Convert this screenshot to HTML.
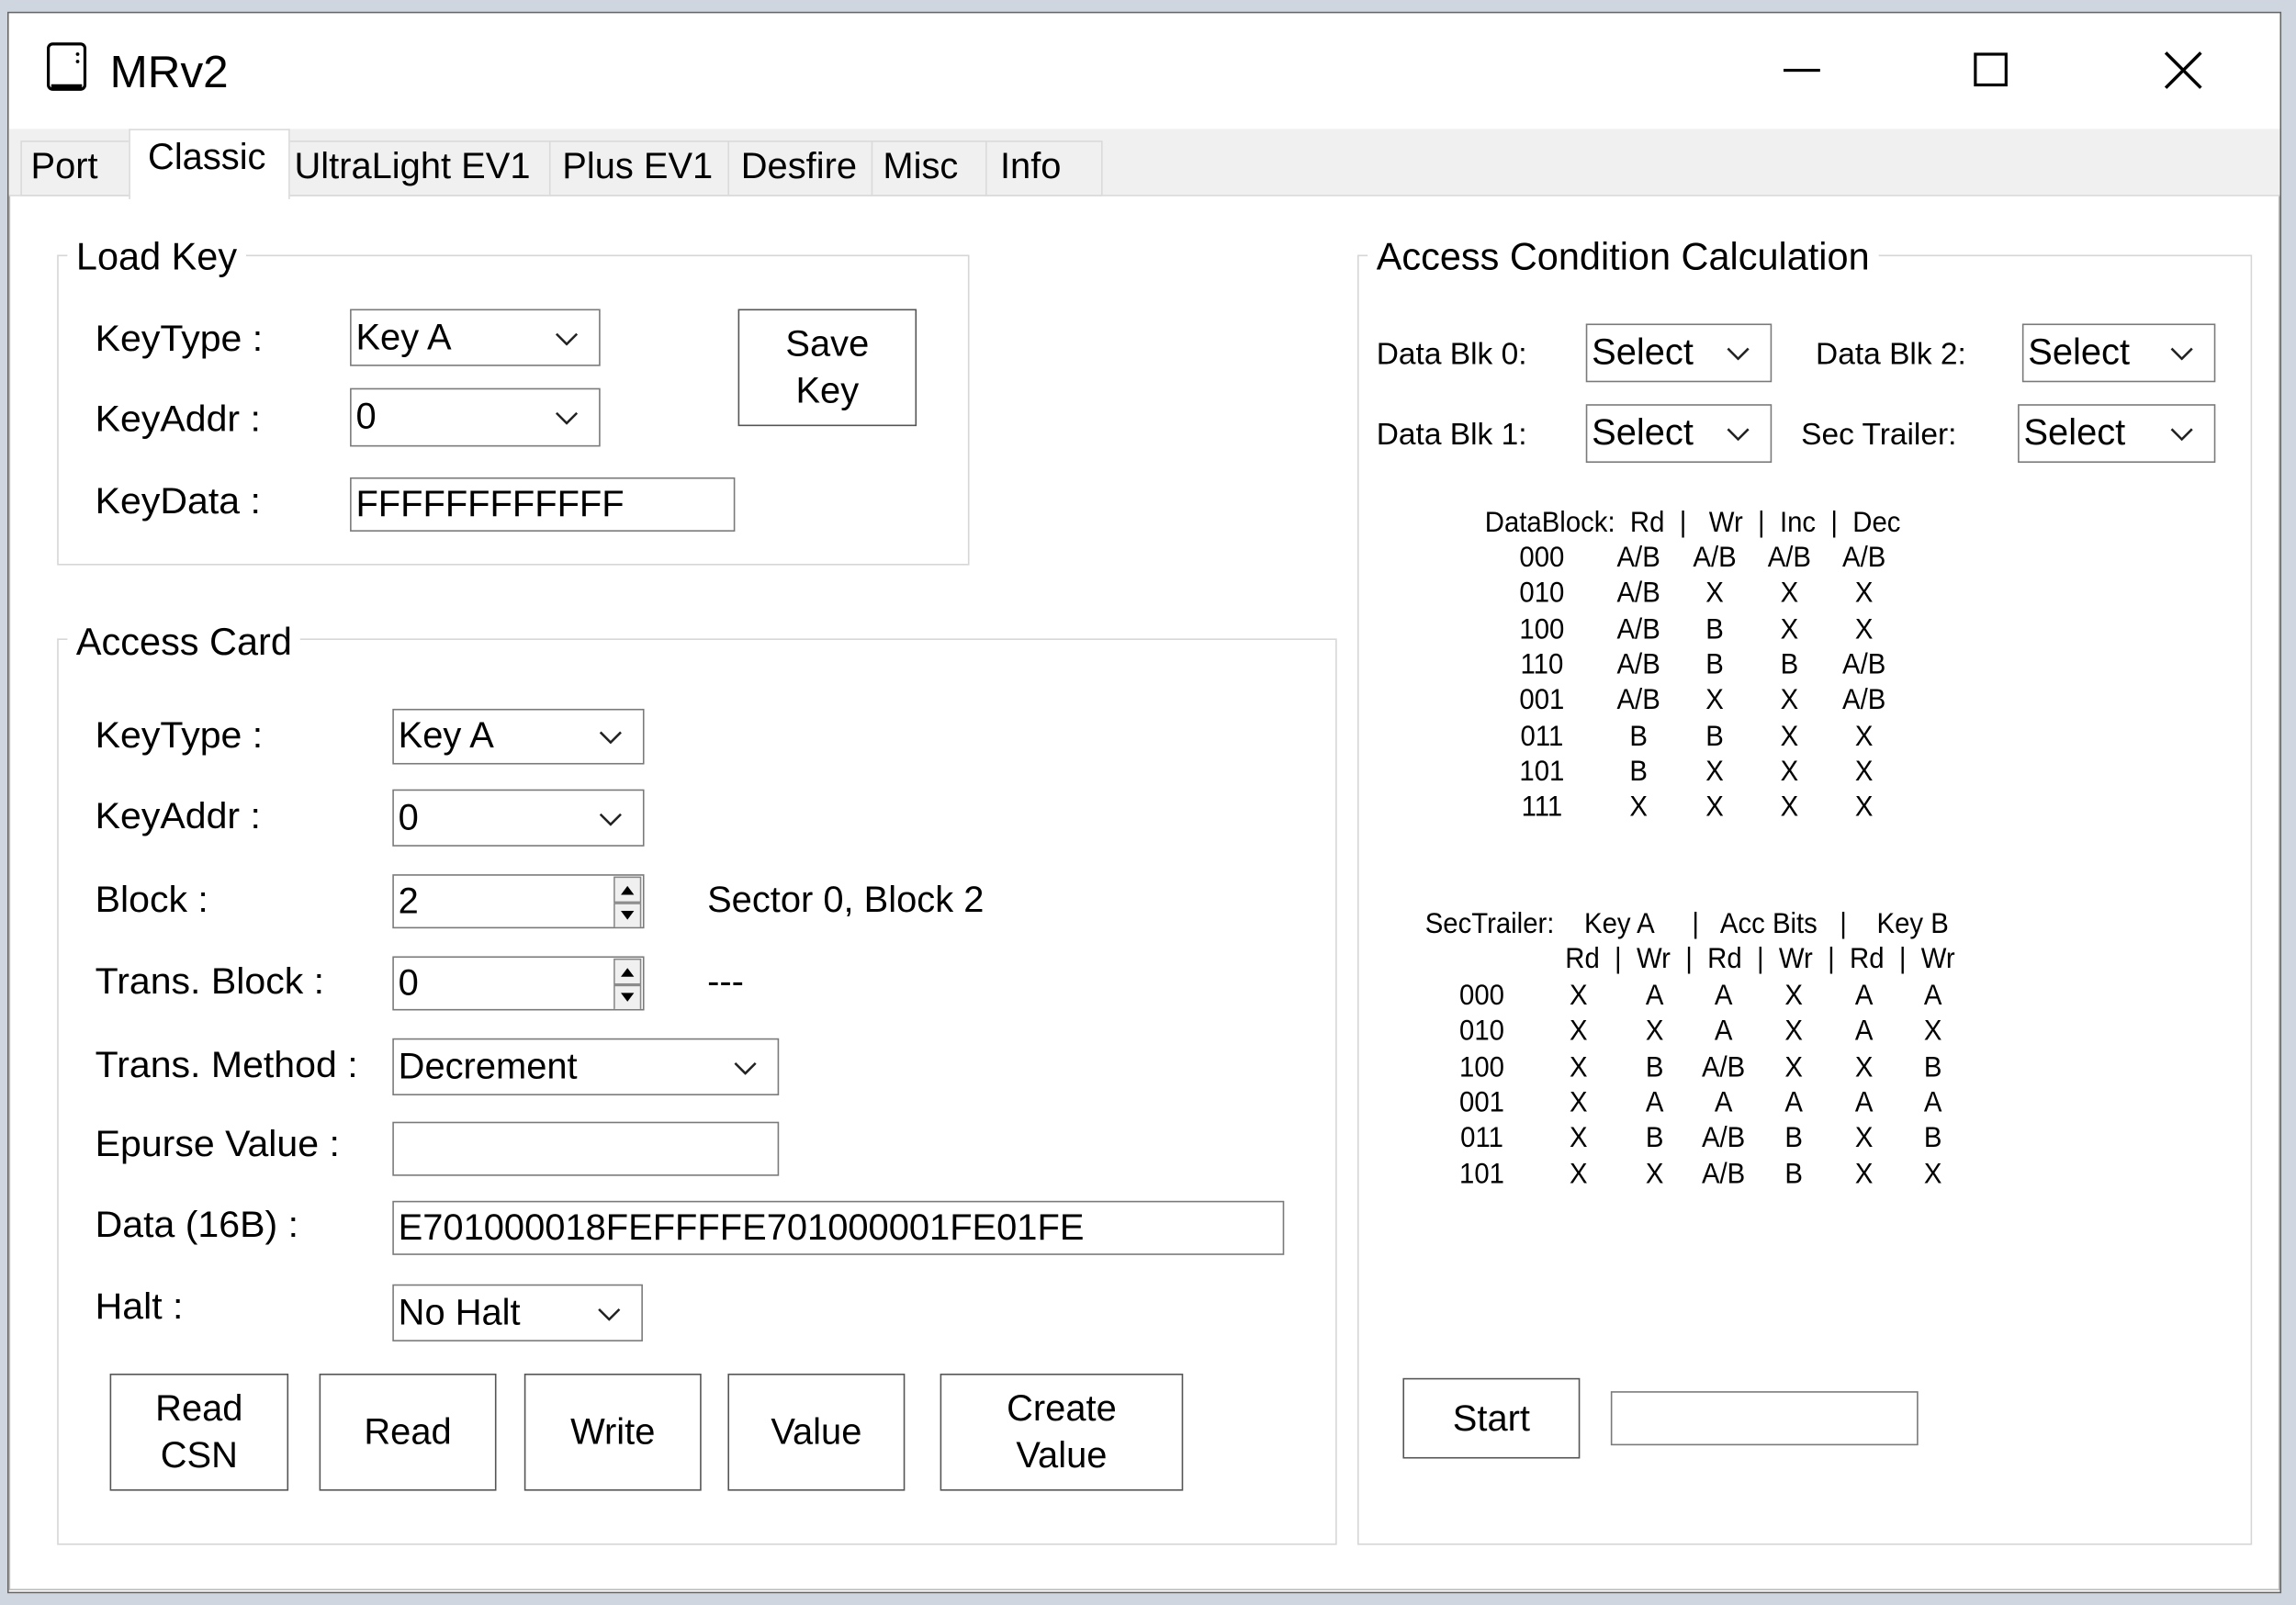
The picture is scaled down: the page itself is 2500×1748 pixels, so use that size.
<!DOCTYPE html>
<html><head><meta charset="utf-8"><style>
html,body{margin:0;padding:0;width:2500px;height:1748px;overflow:hidden;background:#cfd6e0}
#w{position:absolute;left:0;top:0;width:1568px;height:1096px;transform:scale(1.5944,1.5949);transform-origin:0 0;font-family:"Liberation Sans",sans-serif;color:#000}
.a{position:absolute}
.t{position:absolute;white-space:nowrap;font-size:25px;line-height:1;transform:translateY(-50%)}
.l{transform:translateY(-50%) scaleX(1.03);transform-origin:0 50%}
.s{position:absolute;white-space:nowrap;font-size:20px;line-height:1;transform:translate(-50%,-50%) scaleX(.92)}
.box{position:absolute;border:1px solid #d6d6d6}
.lg{position:absolute;background:#fff;padding:0 6px;font-size:26px;line-height:1;transform:translateY(-50%)}
.cb{position:absolute;background:#fff;border:1px solid #7a7a7a;box-sizing:border-box;font-size:25px}
.cb span{position:absolute;left:3px;top:50%;transform:translateY(-50%);white-space:nowrap;line-height:1}
.cb svg{position:absolute;right:14px;top:50%;margin-top:-4px}
.btn{position:absolute;background:#fff;border:1.5px solid #555;box-sizing:border-box;font-size:25px;display:flex;align-items:center;justify-content:center;text-align:center;line-height:32px}
.spin{position:absolute;right:0;top:0;width:20px;height:100%}
</style></head><body><div id="w">
<div class="a" style="left:5px;top:8px;width:1553px;height:1080px;background:#fff;border:1px solid #666;box-sizing:border-box"></div>
<svg class="a" style="left:31px;top:28px" width="30" height="36"><rect x="2" y="2" width="25" height="31" rx="3" fill="none" stroke="#000" stroke-width="2"/><line x1="4" y1="31" x2="25" y2="31" stroke="#000" stroke-width="3"/><circle cx="22" cy="9" r="1.2"/><circle cx="22" cy="14" r="1.2"/></svg>
<div class="t" style="left:75px;top:49px;font-size:31px">MRv2</div>
<div class="a" style="left:1218px;top:47px;width:25px;height:2px;background:#000"></div>
<div class="a" style="left:1348px;top:36px;width:23px;height:23px;border:2px solid #000;box-sizing:border-box"></div>
<svg class="a" style="left:1478px;top:35px" width="26" height="26"><path d="M1 1L25 25M25 1L1 25" stroke="#000" stroke-width="2.2"/></svg>
<div class="a" style="left:6px;top:88px;width:1551px;height:46px;background:#f0f0f0;border-bottom:1px solid #dadada;box-sizing:border-box"></div>
<div class="a" style="left:14px;top:96px;width:739px;height:38px;border:1px solid #dadada;box-sizing:border-box"></div>
<div class="a" style="left:88px;top:88px;width:110px;height:48px;background:#fff;border:1px solid #dadada;border-bottom:none;box-sizing:border-box"></div>
<div class="a" style="left:375px;top:96px;width:1px;height:38px;background:#dadada"></div>
<div class="a" style="left:497px;top:96px;width:1px;height:38px;background:#dadada"></div>
<div class="a" style="left:595px;top:96px;width:1px;height:38px;background:#dadada"></div>
<div class="a" style="left:673px;top:96px;width:1px;height:38px;background:#dadada"></div>
<div class="t" style="left:21px;top:114px">Port</div>
<div class="t" style="left:101px;top:108px">Classic</div>
<div class="t" style="left:201px;top:114px">UltraLight EV1</div>
<div class="t" style="left:384px;top:114px">Plus EV1</div>
<div class="t" style="left:506px;top:114px">Desfire</div>
<div class="t" style="left:603px;top:114px">Misc</div>
<div class="t" style="left:683px;top:114px">Info</div>
<div class="a" style="left:6px;top:134px;width:1551px;height:952px;border:1px solid #bbb;border-top:none;box-sizing:border-box"></div>

<div class="box" style="left:39px;top:174px;width:621px;height:210px"></div>
<div class="lg" style="left:46px;top:175px">Load Key</div>
<div class="t l" style="left:65px;top:232px">KeyType :</div>
<div class="t l" style="left:65px;top:287px">KeyAddr :</div>
<div class="t l" style="left:65px;top:343px">KeyData :</div>
<div class="cb" style="left:239px;top:211px;width:171px;height:39px"><span>Key A</span><svg width="16" height="9"><path d="M1 1L8 8L15 1" fill="none" stroke="#222" stroke-width="1.6"/></svg></div>
<div class="cb" style="left:239px;top:265px;width:171px;height:40px"><span>0</span><svg width="16" height="9"><path d="M1 1L8 8L15 1" fill="none" stroke="#222" stroke-width="1.6"/></svg></div>
<div class="cb" style="left:239px;top:326px;width:263px;height:37px"><span>FFFFFFFFFFFF</span></div>
<div class="btn" style="left:504px;top:211px;width:122px;height:80px">Save<br>Key</div>

<div class="box" style="left:39px;top:436px;width:872px;height:617px"></div>
<div class="lg" style="left:46px;top:438px">Access Card</div>
<div class="t l" style="left:65px;top:503px">KeyType :</div>
<div class="t l" style="left:65px;top:558px">KeyAddr :</div>
<div class="t l" style="left:65px;top:615px">Block :</div>
<div class="t l" style="left:65px;top:671px">Trans. Block :</div>
<div class="t l" style="left:65px;top:728px">Trans. Method :</div>
<div class="t l" style="left:65px;top:782px">Epurse Value :</div>
<div class="t l" style="left:65px;top:837px">Data (16B) :</div>
<div class="t l" style="left:65px;top:893px">Halt :</div>
<div class="cb" style="left:268px;top:484px;width:172px;height:38px"><span>Key A</span><svg width="16" height="9"><path d="M1 1L8 8L15 1" fill="none" stroke="#222" stroke-width="1.6"/></svg></div>
<div class="cb" style="left:268px;top:539px;width:172px;height:39px"><span>0</span><svg width="16" height="9"><path d="M1 1L8 8L15 1" fill="none" stroke="#222" stroke-width="1.6"/></svg></div>
<div class="cb" style="left:268px;top:597px;width:172px;height:37px"><span>2</span><svg class="spin" style="right:0;top:0;margin:0" width="20" height="37"><rect x="0.5" y="1" width="18" height="17" fill="#f0f0f0" stroke="#888"/><rect x="0.5" y="19" width="18" height="17" fill="#f0f0f0" stroke="#888"/><path d="M5 13L9.5 7L14 13Z M5 24L9.5 30L14 24Z" fill="#000"/></svg></div>
<div class="cb" style="left:268px;top:653px;width:172px;height:37px"><span>0</span><svg class="spin" style="right:0;top:0;margin:0" width="20" height="37"><rect x="0.5" y="1" width="18" height="17" fill="#f0f0f0" stroke="#888"/><rect x="0.5" y="19" width="18" height="17" fill="#f0f0f0" stroke="#888"/><path d="M5 13L9.5 7L14 13Z M5 24L9.5 30L14 24Z" fill="#000"/></svg></div>
<div class="t" style="left:483px;top:615px">Sector 0, Block 2</div>
<div class="t" style="left:483px;top:671px">---</div>
<div class="cb" style="left:268px;top:709px;width:264px;height:39px"><span>Decrement</span><svg width="16" height="9"><path d="M1 1L8 8L15 1" fill="none" stroke="#222" stroke-width="1.6"/></svg></div>
<div class="cb" style="left:268px;top:766px;width:264px;height:37px"></div>
<div class="cb" style="left:268px;top:820px;width:609px;height:37px"><span>E701000018FEFFFFE701000001FE01FE</span></div>
<div class="cb" style="left:268px;top:877px;width:171px;height:39px"><span>No Halt</span><svg width="16" height="9"><path d="M1 1L8 8L15 1" fill="none" stroke="#222" stroke-width="1.6"/></svg></div>
<div class="btn" style="left:75px;top:938px;width:122px;height:80px">Read<br>CSN</div>
<div class="btn" style="left:218px;top:938px;width:121px;height:80px">Read</div>
<div class="btn" style="left:358px;top:938px;width:121px;height:80px">Write</div>
<div class="btn" style="left:497px;top:938px;width:121px;height:80px">Value</div>
<div class="btn" style="left:642px;top:938px;width:166px;height:80px">Create<br>Value</div>

<div class="box" style="left:927px;top:174px;width:609px;height:879px"></div>
<div class="lg" style="left:934px;top:175px">Access Condition Calculation</div>
<div class="t" style="left:940px;top:242px;font-size:21px">Data Blk 0:</div>
<div class="t" style="left:940px;top:297px;font-size:21px">Data Blk 1:</div>
<div class="t" style="left:1240px;top:242px;font-size:21px">Data Blk 2:</div>
<div class="t" style="left:1230px;top:297px;font-size:21px">Sec Trailer:</div>
<div class="cb" style="left:1083px;top:221px;width:127px;height:40px"><span>Select</span><svg width="16" height="9"><path d="M1 1L8 8L15 1" fill="none" stroke="#222" stroke-width="1.6"/></svg></div>
<div class="cb" style="left:1083px;top:276px;width:127px;height:40px"><span>Select</span><svg width="16" height="9"><path d="M1 1L8 8L15 1" fill="none" stroke="#222" stroke-width="1.6"/></svg></div>
<div class="cb" style="left:1381px;top:221px;width:132px;height:40px"><span>Select</span><svg width="16" height="9"><path d="M1 1L8 8L15 1" fill="none" stroke="#222" stroke-width="1.6"/></svg></div>
<div class="cb" style="left:1378px;top:276px;width:135px;height:40px"><span>Select</span><svg width="16" height="9"><path d="M1 1L8 8L15 1" fill="none" stroke="#222" stroke-width="1.6"/></svg></div>

<div class="s" style="left:1156px;top:357px">DataBlock:&nbsp; Rd&nbsp; |&nbsp;&nbsp; Wr&nbsp; |&nbsp; Inc&nbsp; |&nbsp; Dec</div>
<div id="t1"></div>
<div class="s" style="left:1152px;top:631px">SecTrailer:&nbsp;&nbsp;&nbsp; Key A&nbsp;&nbsp;&nbsp;&nbsp; |&nbsp;&nbsp; Acc Bits&nbsp;&nbsp; |&nbsp;&nbsp;&nbsp; Key B</div>
<div class="s" style="left:1202px;top:655px">Rd&nbsp; |&nbsp; Wr&nbsp; |&nbsp; Rd&nbsp; |&nbsp; Wr&nbsp; |&nbsp; Rd&nbsp; |&nbsp; Wr</div>
<div id="t2"></div>

<div class="btn" style="left:958px;top:941px;width:121px;height:55px">Start</div>
<div class="cb" style="left:1100px;top:950px;width:210px;height:37px"></div>
</div>
<script>
function tbl(id,xs,y0,dy,rows){var h='';rows.forEach(function(r,i){r.forEach(function(c,j){h+='<div class="s" style="left:'+xs[j]+'px;top:'+(y0+i*dy)+'px">'+c+'</div>';});});document.getElementById(id).outerHTML=h;}
tbl('t1',[1053,1119,1171,1222,1273],381,24.3,[
['000','A/B','A/B','A/B','A/B'],['010','A/B','X','X','X'],['100','A/B','B','X','X'],['110','A/B','B','B','A/B'],
['001','A/B','X','X','A/B'],['011','B','B','X','X'],['101','B','X','X','X'],['111','X','X','X','X']]);
tbl('t2',[1012,1078,1130,1177,1225,1273,1320],680,24.3,[
['000','X','A','A','X','A','A'],['010','X','X','A','X','A','X'],['100','X','B','A/B','X','X','B'],
['001','X','A','A','A','A','A'],['011','X','B','A/B','B','X','B'],['101','X','X','A/B','B','X','X']]);
</script>
</body></html>
